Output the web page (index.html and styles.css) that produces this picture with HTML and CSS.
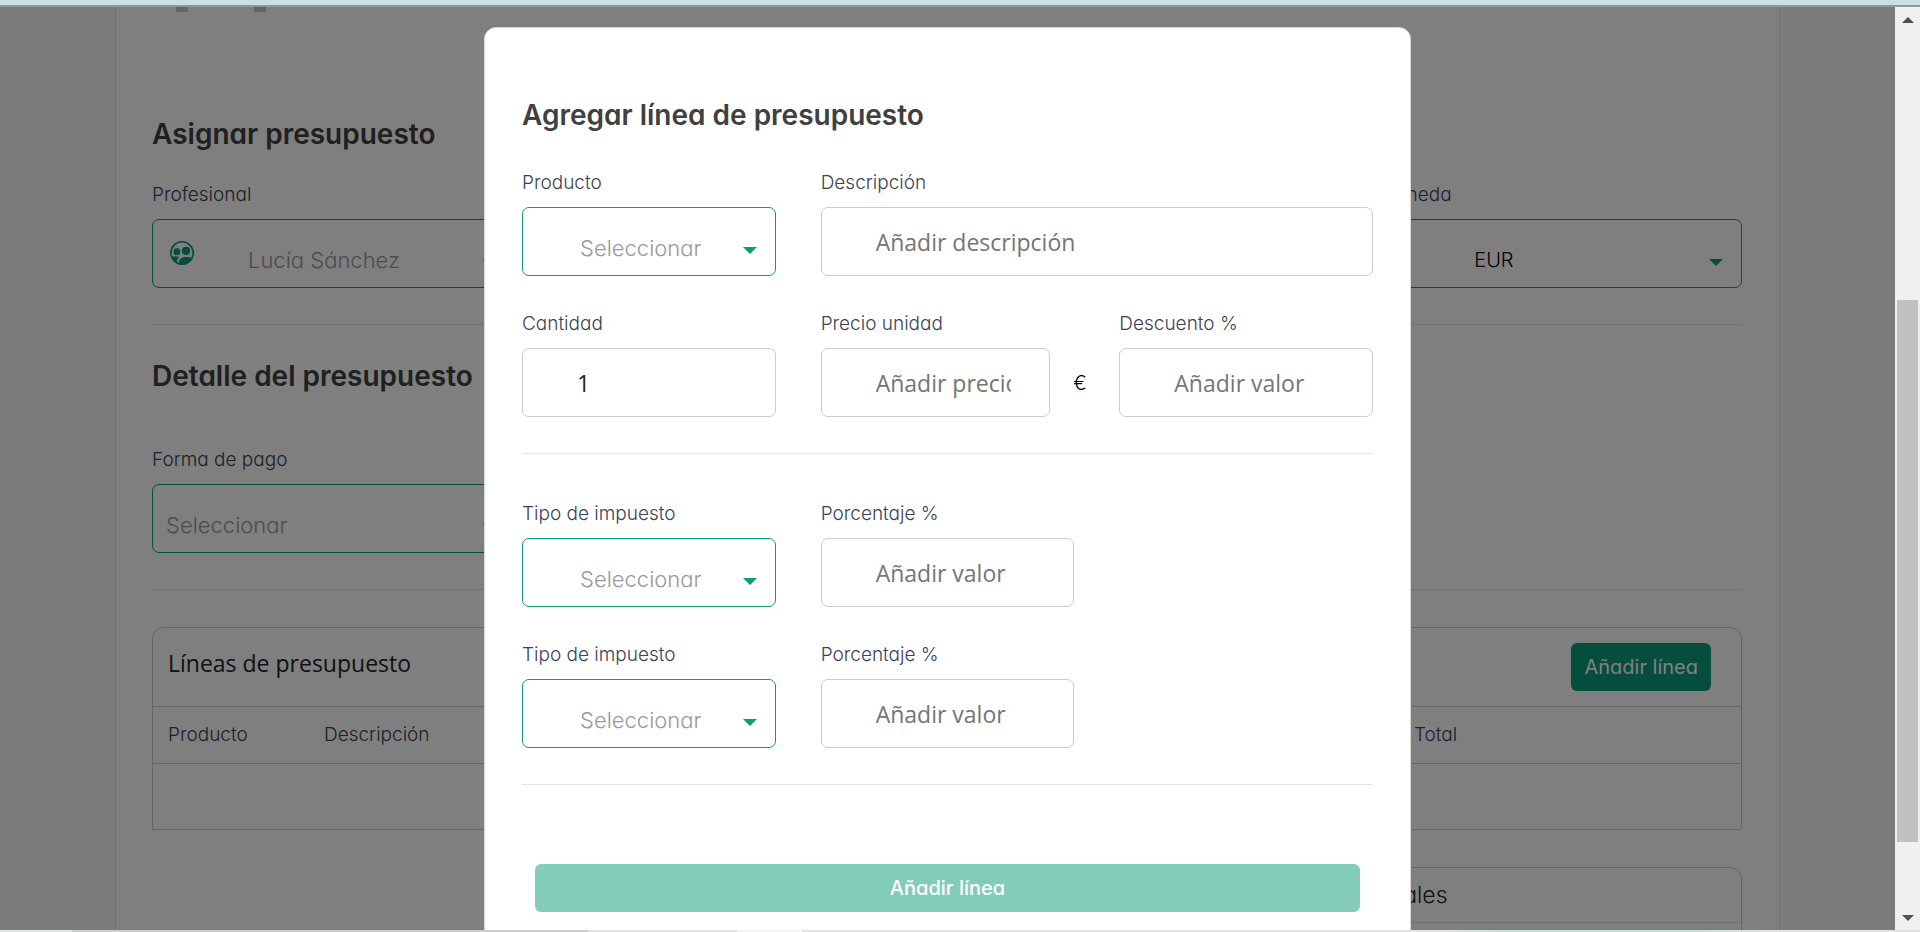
FILE: index.html
```html
<!DOCTYPE html>
<html lang="es">
<head>
    <meta charset="UTF-8">
    <meta name="viewport" content="width=device-width, initial-scale=1.0">
    <title>Presupuesto</title>
    <link rel="stylesheet" href="styles.css">
</head>
<body>

    <div class="topbar"></div>

    <div class="viewport">
        <div class="app">
            <main class="page">
                <div class="marks"><span></span><span></span></div>

                <h2 class="heading">Asignar presupuesto</h2>
                <div class="grid-4">
                    <div class="field">
                        <label for="profesional">Profesional</label>
                        <div class="select select-icon">
                            <svg class="icon" viewBox="0 0 24 24" aria-hidden="true">
                                <circle cx="12" cy="12" r="11.2" fill="none" stroke="currentColor" stroke-width="1.6"/>
                                <circle cx="6.9" cy="10.7" r="3.5"/>
                                <circle cx="16" cy="9.9" r="4.1"/>
                                <path d="M1 15.800C4 15 7 15 9.600 16.100C7.600 17.600 6.600 19.300 7 22.200C4 21 2 19 1 15.800Z"/>
                                <path d="M8.600 23C8.600 18.500 11.300 16 16 16C18.600 16 20.700 16.300 22.900 17.200C20.800 21.300 16.500 24 12 23.800C10.800 23.700 9.600 23.400 8.600 23Z"/>
                            </svg>
                            <select id="profesional" class="muted">
                                <option>Lucía Sánchez</option>
                            </select>
                        </div>
                    </div>
                    <div class="field last">
                        <label for="moneda">Moneda</label>
                        <div class="select select-icon">
                            <select id="moneda">
                                <option>EUR</option>
                            </select>
                        </div>
                    </div>
                </div>
                <hr>

                <h2 class="heading heading-detail">Detalle del presupuesto</h2>
                <div class="grid-4">
                    <div class="field">
                        <label for="pago">Forma de pago</label>
                        <div class="select select-plain">
                            <select id="pago" class="muted">
                                <option>Seleccionar</option>
                            </select>
                        </div>
                    </div>
                </div>
                <hr>

                <section class="card">
                    <div class="card-head">
                        <h3>Líneas de presupuesto</h3>
                        <button type="button" class="btn">Añadir línea</button>
                    </div>
                    <table>
                        <thead>
                            <tr>
                                <th class="col-product">Producto</th>
                                <th>Descripción</th>
                                <th class="col-total">Total</th>
                            </tr>
                        </thead>
                        <tbody>
                            <tr><td colspan="3"></td></tr>
                        </tbody>
                    </table>
                </section>

                <section class="card totals">
                    <h3>Totales</h3>
                </section>
            </main>

            <div class="overlay">
                <form class="modal" role="dialog" aria-labelledby="modalTitle">
                    <h2 class="heading" id="modalTitle">Agregar línea de presupuesto</h2>

                    <div class="grid-3">
                        <div class="field">
                            <label for="producto">Producto</label>
                            <div class="select">
                                <select id="producto" class="muted"><option>Seleccionar</option></select>
                            </div>
                        </div>
                        <div class="field wide">
                            <label for="descripcion">Descripción</label>
                            <input type="text" id="descripcion" placeholder="Añadir descripción">
                        </div>
                        <div class="field">
                            <label for="cantidad">Cantidad</label>
                            <input type="text" id="cantidad" value="1">
                        </div>
                        <div class="field">
                            <label for="precio">Precio unidad</label>
                            <div class="price">
                                <input type="text" id="precio" placeholder="Añadir precio">
                                <span>€</span>
                            </div>
                        </div>
                        <div class="field">
                            <label for="descuento">Descuento %</label>
                            <input type="text" id="descuento" placeholder="Añadir valor">
                        </div>
                    </div>
                    <hr>

                    <div class="grid-3 taxes">
                        <div class="field">
                            <label for="impuesto1">Tipo de impuesto</label>
                            <div class="select">
                                <select id="impuesto1" class="muted"><option>Seleccionar</option></select>
                            </div>
                        </div>
                        <div class="field">
                            <label for="porcentaje1">Porcentaje %</label>
                            <input type="text" id="porcentaje1" placeholder="Añadir valor">
                        </div>
                        <div class="field first">
                            <label for="impuesto2">Tipo de impuesto</label>
                            <div class="select">
                                <select id="impuesto2" class="muted"><option>Seleccionar</option></select>
                            </div>
                        </div>
                        <div class="field">
                            <label for="porcentaje2">Porcentaje %</label>
                            <input type="text" id="porcentaje2" placeholder="Añadir valor">
                        </div>
                    </div>
                    <hr>

                    <div class="modal-actions">
                        <button type="submit" class="btn" disabled>Añadir línea</button>
                    </div>
                </form>
            </div>
        </div>

        <div class="scrollbar">
            <span class="arrow-up"></span>
            <div class="track"><div class="thumb"></div></div>
            <span class="arrow-down"></span>
        </div>
    </div>

    <div class="bottombar"></div>

</body>
</html>
```
FILE: styles.css
```css
* {
    box-sizing: border-box;
}
body {
    margin: 0;
    height: 100vh;
    display: flex;
    flex-direction: column;
    overflow: hidden;
    font-family: Inter, sans-serif;
    font-feature-settings: "cv11";
    font-weight: 300;
    color: #212529;
}
.topbar {
    height: 7px;
    flex: none;
    background-color: #c9e0e3;
    border-bottom: 2px solid #8a9a9c;
}
.bottombar {
    height: 2px;
    flex: none;
    background: linear-gradient(to right, #dfe9e4 72px, #cdcdcd 72px 588px, #e2e2e2 588px 737px, #f4f4f4 737px 802px, #e2e2e2 802px 1450px, #c4e4d8 1500px 1700px, #e2e2e2 1760px);
}
.viewport {
    flex: 1;
    min-height: 0;
    display: flex;
}
.app {
    flex: 1;
    position: relative;
    overflow: hidden;
    background-color: #f9f9fc;
    padding: 0 115px;
}
.page {
    background-color: #fff;
    border: solid #e3e3e6;
    border-width: 0 1px;
    padding: 0 37px 0 36px;
    height: 100%;
}
.marks {
    display: flex;
    gap: 66px;
    padding-left: 24px;
    margin-bottom: 103px;
}
.marks span {
    width: 12px;
    height: 5px;
    background-color: #ccc;
}
.heading {
    margin: 0 0 30px;
    font-size: 28px;
    line-height: 38px;
    font-weight: 600;
    color: #404040;
}
.heading-detail {
    margin-bottom: 53px;
}
hr {
    border: 0;
    border-top: 1px solid #e3e3e3;
    margin: 36px 0 32px;
}
.grid-4, .grid-3 {
    display: grid;
    grid-template-columns: repeat(4, 1fr);
    gap: 36px 45px;
}
.grid-3 {
    grid-template-columns: repeat(3, 1fr);
}
.field {
    min-width: 0;
}
.last {
    grid-column: 4;
}
.first {
    grid-column: 1;
}
.wide {
    grid-column: span 2;
}
label {
    display: block;
    font-size: 19px;
    line-height: 24px;
    margin-bottom: 12px;
    color: #3c4257;
}
input, select {
    display: block;
    width: 100%;
    height: 69px;
    border: 1px solid #ccc;
    border-radius: 7px;
    background-color: transparent;
    font-family: "Open Sans", sans-serif;
    font-weight: 400;
    font-size: 23px;
    color: #212529;
    padding: 0 38px 0 54px;
}
input::placeholder {
    color: #757575;
}
select {
    appearance: none;
    border-color: #0a9b78;
    font-family: inherit;
    font-feature-settings: inherit;
    font-weight: 300;
    font-size: 20px;
    color: #000;
    padding: 12px 38px 0 57px;
}
.muted {
    font-size: 22px;
    color: #999;
}
.select {
    position: relative;
}
.select::after {
    content: "";
    position: absolute;
    right: 19px;
    top: 40px;
    border: 7px solid transparent;
    border-top-color: #0a9b78;
    border-bottom: 0;
    pointer-events: none;
}
.select-icon select {
    padding-left: 95px;
}
.select-plain select {
    padding-left: 13px;
}
.icon {
    position: absolute;
    left: 18px;
    top: 22px;
    width: 24px;
    height: 24px;
    color: #0a9b78;
    fill: currentColor;
}
.card {
    border: 1px solid #ccc;
    border-radius: 12px 12px 0 0;
    margin-top: 37px;
}
.card-head {
    display: flex;
    justify-content: space-between;
    align-items: center;
    height: 79px;
    padding: 0 30px 0 15px;
    border-bottom: 1px solid #ccc;
}
.card h3 {
    margin: 0;
    font-family: "Open Sans", sans-serif;
    font-size: 23px;
    line-height: 32px;
    font-weight: 400;
}
.card-head h3 {
    padding-bottom: 8px;
}
.btn {
    height: 48px;
    border: 0;
    border-radius: 6px;
    background-color: #0a9b78;
    color: #fff;
    font-family: inherit;
    font-feature-settings: inherit;
    font-size: 20px;
    font-weight: 400;
    padding: 0 13px;
}
.btn:disabled {
    opacity: 0.5;
    font-weight: 500;
}
table {
    width: 100%;
    border-collapse: collapse;
    table-layout: fixed;
}
th {
    height: 56px;
    padding: 0 0 0 15px;
    text-align: left;
    font-size: 19px;
    font-weight: 300;
    color: #3c4257;
    border-bottom: 1px solid #ccc;
}
td {
    height: 66px;
    padding: 0;
}
.col-product {
    width: 156px;
}
.col-total {
    width: 342px;
}
.totals {
    width: 388px;
    height: 200px;
    margin-left: auto;
}
.card.totals h3 {
    font-family: inherit;
    font-weight: 300;
    line-height: 54px;
    padding-left: 15px;
    border-bottom: 1px solid #ddd;
}
.overlay {
    position: absolute;
    inset: 0;
    background-color: rgba(0, 0, 0, 0.5);
    display: flex;
    justify-content: center;
    align-items: flex-start;
    padding-top: 20px;
}
.modal {
    width: 927px;
    background-color: #fff;
    border: 1px solid #d8d8d8;
    border-radius: 12px;
    padding: 68px 37px;
}
.modal .heading {
    margin-bottom: 37px;
}
.price {
    display: flex;
    align-items: center;
    gap: 23px;
}
.price input {
    flex: 1;
    min-width: 0;
}
.price span {
    font-size: 20px;
    width: 1px;
    color: #000;
}
.taxes {
    margin-top: 48px;
}
.modal-actions {
    padding: 47px 13px 0;
}
.modal-actions .btn {
    width: 100%;
}
.scrollbar {
    width: 25px;
    background-color: #f0f0f0;
    display: flex;
    flex-direction: column;
    align-items: center;
}
.track {
    flex: 1;
    width: 21px;
    padding-top: 268px;
    padding-bottom: 63px;
    display: flex;
}
.thumb {
    flex: 1;
    background-color: #c1c1c1;
}
.arrow-up, .arrow-down {
    border: 6px solid transparent;
    margin: 10px 0 9px;
}
.arrow-up {
    border-top: 0;
    border-bottom-color: #505050;
}
.arrow-down {
    border-bottom: 0;
    border-top-color: #505050;
}
```
